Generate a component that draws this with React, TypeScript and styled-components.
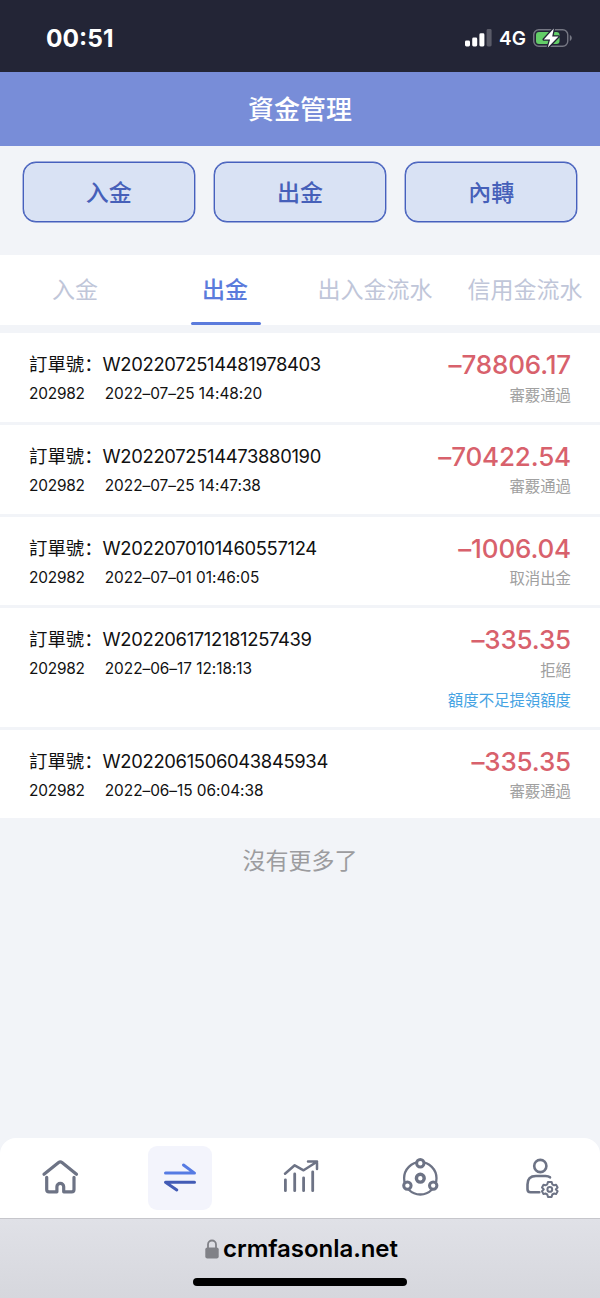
import React from "react";
import styled, { createGlobalStyle } from "styled-components";

const GlobalStyle = createGlobalStyle`
  * { box-sizing: border-box; }
  body {
    margin: 0;
    background: #f2f4f8;
    font-family: Inter, "Noto Sans CJK SC", sans-serif;
    color: #111;
  }
`;

const Page = styled.div`
  display: flex;
  flex-direction: column;
  width: 600px;
  height: 1298px;
  overflow: hidden;
  background: #f2f4f8;
`;

const StatusBar = styled.div`
  display: flex;
  align-items: center;
  justify-content: space-between;
  height: 72px;
  padding: 4px 28px 0 46px;
  background: #232536;
  color: #fff;
`;

const Clock = styled.div`
  font-size: 24.5px;
  font-weight: 700;
  line-height: 30px;
`;

const StatusIcons = styled.div`
  display: flex;
  align-items: center;
`;

const Network = styled.span`
  margin: 2px 7px 0 7px;
  font-size: 19px;
  font-weight: 600;
  line-height: 24px;
`;

const Header = styled.header`
  display: flex;
  align-items: center;
  justify-content: center;
  height: 73.5px;
  padding-bottom: 2px;
  background: #788dd8;
  color: #fff;
  font-size: 26px;
  font-weight: 500;
`;

const Actions = styled.div`
  display: flex;
  gap: 19px;
  padding: 16.5px 22.5px 0;
  height: 109px;
`;

const ActionButton = styled.button`
  flex: 1;
  height: 60px;
  padding: 0 0 3px;
  border: 1.5px solid #4660bd;
  border-radius: 13px;
  background: #d9e2f4;
  box-shadow: 0 0 0 0.4px #4660bd;
  color: #4660b9;
  font-family: inherit;
  font-size: 23px;
  font-weight: 500;
`;

const Tabs = styled.nav`
  display: grid;
  grid-template-columns: repeat(4, 1fr);
  height: 70.5px;
  margin-bottom: 8px;
  background: #fff;
`;

const Tab = styled.div<{ $active?: boolean }>`
  display: flex;
  flex-direction: column;
  align-items: center;
  justify-content: space-between;
  color: ${(p) => (p.$active ? "#5b7bdc" : "#c0c6d9")};
  font-size: 23px;
  font-weight: ${(p) => (p.$active ? 500 : 400)};
  line-height: 70px;
  white-space: nowrap;

  &::after {
    content: "";
    width: 70px;
    height: 3px;
    flex: none;
    margin: -3px 0 0 2px;
    border-radius: 2px;
    background: ${(p) => (p.$active ? "#5b7bdc" : "transparent")};
  }
`;

const List = styled.div`
  display: flex;
  flex-direction: column;
  gap: 3px;
`;

const Row = styled.div<{ $tall?: boolean }>`
  display: flex;
  justify-content: space-between;
  height: ${(p) => (p.$tall ? 118.3 : 88.75)}px;
  padding: 16px 29px 0;
  background: #fff;
`;

const Details = styled.div`
  display: flex;
  flex-direction: column;
`;

const OrderLine = styled.div`
  font-size: 18.4px;
  font-weight: 400;
  line-height: 30px;
`;

const OrderNumber = styled.span`
  letter-spacing: -0.33px;
`;

const MetaLine = styled.div`
  display: flex;
  gap: 20px;
  font-size: 15.4px;
  letter-spacing: -0.2px;
  line-height: 30px;
`;

const Timestamp = styled.span`
  letter-spacing: -0.03px;
`;

const Result = styled.div`
  display: flex;
  flex-direction: column;
  align-items: flex-end;
`;

const Amount = styled.div`
  color: #d8616c;
  font-size: 26px;
  font-weight: 500;
  letter-spacing: -0.15px;
  line-height: 31.5px;
`;

const Status = styled.div<{ $note?: boolean }>`
  color: ${(p) => (p.$note ? "#45a3e3" : "#a0a0a0")};
  font-size: 15.4px;
  font-weight: 400;
  line-height: 30px;
`;

const EndNote = styled.div`
  padding-top: 26px;
  color: #9c9c9f;
  font-size: 23px;
  font-weight: 400;
  line-height: 34px;
  text-align: center;
`;

const BottomNav = styled.nav`
  display: grid;
  grid-template-columns: repeat(5, 1fr);
  height: 80px;
  margin-top: auto;
  border-radius: 16px 16px 0 0;
  background: #fff;
`;

const NavItem = styled.div`
  display: flex;
  align-items: center;
  justify-content: center;
`;

const NavTile = styled.div<{ $active?: boolean }>`
  display: flex;
  align-items: center;
  justify-content: center;
  width: 64px;
  height: 64px;
  padding-bottom: 2px;
  border-radius: 9px;
  background: ${(p) => (p.$active ? "#f3f4fc" : "transparent")};
`;

const NavGlyph = styled.svg`
  width: 40px;
  height: 40px;
  overflow: visible;
  fill: none;
  stroke: #6d7385;
  stroke-linecap: round;
  stroke-linejoin: round;
`;

const BrowserBar = styled.footer`
  display: flex;
  flex-direction: column;
  align-items: center;
  height: 80px;
  border-top: 1px solid #c6c6cb;
  background: linear-gradient(#e0e1e7, #d6d7dd);
`;

const Address = styled.div`
  display: flex;
  align-items: center;
  gap: 4px;
  height: 59px;
  padding-left: 3px;
  color: #000;
  font-size: 24px;
  font-weight: 600;
  letter-spacing: -0.05px;
`;

const HomeIndicator = styled.div`
  width: 214px;
  height: 8px;
  border-radius: 4px;
  background: #000;
`;

const SignalIcon = () => (
  <svg width="27" height="18" viewBox="0 0 27 18" fill="#fff">
    <rect x="0" y="11.5" width="5" height="6" rx="1.4" />
    <rect x="7.2" y="8.5" width="5" height="9" rx="1.4" />
    <rect x="14.4" y="4.3" width="5" height="13.2" rx="1.4" />
    <rect x="21.6" y="0" width="5" height="17.5" rx="1.4" opacity=".25" />
  </svg>
);

const BatteryIcon = () => (
  <svg width="39" height="20" viewBox="0 0 39 20">
    <rect x=".75" y="1.75" width="34" height="16.5" rx="5" fill="none" stroke="#757783" strokeWidth="1.4" />
    <path d="M36.8 7v6c1.2-.5 2-1.600 2-3s-.8-2.500-2-3z" fill="#757783" />
    <rect x="3" y="4" width="23.5" height="12" rx="3" fill="#63cd68" />
    <path
      d="M20.800 .6 10.800 11.500h6.300l-2.300 8.100L25.500 8.600h-6.300z"
      fill="#fff"
      stroke="#232536"
      strokeWidth="2.6"
      strokeLinejoin="round"
      paintOrder="stroke"
    />
  </svg>
);

const LockIcon = () => (
  <svg width="14" height="20" viewBox="0 0 14 20">
    <path d="M3 9V5.500a4 4 0 0 1 8 0V9" fill="none" stroke="#808187" strokeWidth="1.8" />
    <rect x=".3" y="8.5" width="13.4" height="11" rx="2" fill="#808187" />
  </svg>
);

const HomeIcon = () => (
  <NavGlyph viewBox="0 0 40 40" strokeWidth={3.2}>
    <path d="M4 17.300 18.600 5.500q1.700-1.300 3.400 0L36.500 17.300" />
    <path d="M6.700 20.300V32.500q0 2.300 2.300 2.300h7.900V29.700a3.400 3.400 0 0 1 6.800 0v5.100H31.700q2.300 0 2.300-2.300V20.300" />
  </NavGlyph>
);

const TransferIcon = () => (
  <NavGlyph viewBox="0 0 40 40" strokeWidth={3}>
    <path d="M5.500 16.100h29L23.500 8" stroke="#567be3" />
    <path d="M34.500 25.200h-29L16.800 33" stroke="#425bb5" />
  </NavGlyph>
);

const ChartIcon = () => (
  <NavGlyph viewBox="0 0 40 40" strokeWidth={2.8}>
    <path d="M5.400 22.800V33.700M14.700 17V33.700M23.600 20.800V33.700M32.700 14.800V33.700" />
    <path d="M5 16.700 14.700 8.300 23.600 13.300 37 4.700M28 4.400H37V12" strokeWidth={2.5} />
  </NavGlyph>
);

const NetworkIcon = () => (
  <NavGlyph viewBox="0 0 40 40" strokeWidth={3}>
    <circle cx="20.300" cy="21.300" r="16.200" strokeWidth={2.3} />
    <circle cx="20.300" cy="21.200" r="3.900" strokeWidth={3.4} />
    <g fill="#fff">
      <circle cx="20.300" cy="6.300" r="3.700" />
      <circle cx="7.400" cy="28.600" r="3.700" />
      <circle cx="33.200" cy="28.600" r="3.700" />
    </g>
  </NavGlyph>
);

const ProfileIcon = () => (
  <NavGlyph viewBox="0 0 40 40" strokeWidth={2.6}>
    <circle cx="20.300" cy="9" r="6.100" />
    <path d="M30 20.300Q28.500 19 25.500 19H16Q7.500 19 7.500 27.500V32.300Q7.500 35.200 10.500 35.200H19.300" />
    <g transform="translate(29.800 32.400)" strokeWidth={2}>
      <path d="M-1.800-7.500H1.800L2.500-5.100 4.400-4.100 6.300-4.700 7.800-1.900 6 0 7.800 1.900 6.300 4.700 4.400 4.100 2.500 5.100 1.800 7.500H-1.800L-2.500 5.100-4.400 4.100-6.300 4.700-7.800 1.900-6 0-7.800-1.900-6.300-4.700-4.400-4.100-2.500-5.100z" />
      <circle r="2.400" />
    </g>
  </NavGlyph>
);

const actions = ["入金", "出金", "內轉"];
const tabs = ["入金", "出金", "出入金流水", "信用金流水"];
const activeTab = 1;

interface Order {
  id: string;
  time: string;
  amount: string;
  status: string;
  note?: string;
}

const orders: Order[] = [
  { id: "W2022072514481978403", time: "2022–07–25 14:48:20", amount: "–78806.17", status: "審覈通過" },
  { id: "W2022072514473880190", time: "2022–07–25 14:47:38", amount: "–70422.54", status: "審覈通過" },
  { id: "W2022070101460557124", time: "2022–07–01 01:46:05", amount: "–1006.04", status: "取消出金" },
  { id: "W2022061712181257439", time: "2022–06–17 12:18:13", amount: "–335.35", status: "拒絕", note: "額度不足提領額度" },
  { id: "W2022061506043845934", time: "2022–06–15 06:04:38", amount: "–335.35", status: "審覈通過" },
];

const navIcons = [HomeIcon, TransferIcon, ChartIcon, NetworkIcon, ProfileIcon];
const activeNav = 1;

export default function App() {
  return (
    <>
      <GlobalStyle />
      <Page>
        <StatusBar>
          <Clock>00:51</Clock>
          <StatusIcons>
            <SignalIcon />
            <Network>4G</Network>
            <BatteryIcon />
          </StatusIcons>
        </StatusBar>
        <Header>資金管理</Header>
        <Actions>
          {actions.map((label) => (
            <ActionButton key={label}>{label}</ActionButton>
          ))}
        </Actions>
        <Tabs>
          {tabs.map((label, i) => (
            <Tab key={label} $active={i === activeTab}>
              {label}
            </Tab>
          ))}
        </Tabs>
        <List>
          {orders.map((order) => (
            <Row key={order.id} $tall={Boolean(order.note)}>
              <Details>
                <OrderLine>
                  訂單號：<OrderNumber>{order.id}</OrderNumber>
                </OrderLine>
                <MetaLine>
                  <span>202982</span>
                  <Timestamp>{order.time}</Timestamp>
                </MetaLine>
              </Details>
              <Result>
                <Amount>{order.amount}</Amount>
                <Status>{order.status}</Status>
                {order.note && <Status $note>{order.note}</Status>}
              </Result>
            </Row>
          ))}
        </List>
        <EndNote>沒有更多了</EndNote>
        <BottomNav>
          {navIcons.map((Icon, i) => (
            <NavItem key={i}>
              <NavTile $active={i === activeNav}>
                <Icon />
              </NavTile>
            </NavItem>
          ))}
        </BottomNav>
        <BrowserBar>
          <Address>
            <LockIcon />
            crmfasonla.net
          </Address>
          <HomeIndicator />
        </BrowserBar>
      </Page>
    </>
  );
}
